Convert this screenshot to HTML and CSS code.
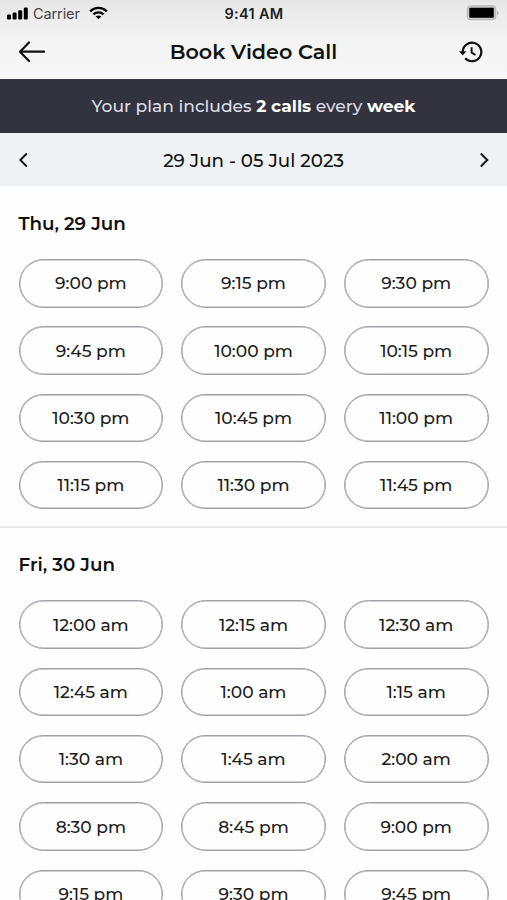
FILE: index.html
```html
<!DOCTYPE html>
<html lang="en">
<head>
    <meta charset="UTF-8">
    <meta name="viewport" content="width=device-width, initial-scale=1.0">
    <title>Book Video Call</title>
    <link rel="stylesheet" href="styles.css">
</head>
<body>
    <header class="header">
        <div class="status-bar">
            <div class="status-left">
                <svg class="signal-icon" width="22" height="13" viewBox="0 0 22 13" fill="#000">
                    <rect x="0" y="7.5" width="4" height="5" rx="1.2"/>
                    <rect x="5.6" y="5.5" width="4" height="7" rx="1.2"/>
                    <rect x="11.2" y="3.3" width="4" height="9.2" rx="1.2"/>
                    <rect x="16.8" y="0.5" width="4" height="12" rx="1.2"/>
                </svg>
                <span class="carrier">Carrier</span>
                <svg class="wifi-icon" width="19" height="14" viewBox="0 0 20 14" fill="none" stroke="#000" stroke-width="2.5">
                    <path d="M1.3 5.2C6.2 0.4 13.8 0.4 18.7 5.2"/>
                    <path d="M4.6 8.5C7.7 5.6 12.3 5.6 15.4 8.5"/>
                    <path d="M7 10.7C8.7 9.2 11.3 9.2 13 10.7L10 13.7Z" fill="#000" stroke="none"/>
                </svg>
            </div>
            <span class="clock">9:41 AM</span>
            <div class="status-right">
                <svg width="33" height="16" viewBox="0 0 33 16">
                    <rect x="1.3" y="0.8" width="28.5" height="14" rx="3.2" fill="#c9c9c9" stroke="#b4b4b4"/>
                    <rect x="3.3" y="2.8" width="24.5" height="10" rx="1" fill="#000"/>
                    <path d="M31 5.4C33 6.2 33 9.4 31 10.2Z" fill="#b4b4b4"/>
                </svg>
            </div>
        </div>
        <div class="title-bar">
            <button class="icon-btn" aria-label="Back">
                <svg width="28" height="22" viewBox="0 0 28 22" fill="none" stroke="#111" stroke-width="2.2" stroke-linecap="round" stroke-linejoin="round">
                    <path d="M26 10.7H2M11 1.5L2 10.7L11 19.9"/>
                </svg>
            </button>
            <h1>Book Video Call</h1>
            <button class="icon-btn" aria-label="History">
                <svg width="24" height="22" viewBox="0 0 24 22" fill="none" stroke="#111" stroke-width="2.2">
                    <path d="M3.7 11A9.3 9.3 0 1 1 6.2 17.3"/>
                    <path d="M0 10.2H7.4L3.7 14.6Z" fill="#111" stroke="none"/>
                    <path d="M12.6 6.2V11.6L16.5 14" stroke-width="1.9"/>
                </svg>
            </button>
        </div>
    </header>

    <div class="plan-banner">
        <p>Your plan includes <strong>2 calls</strong> every <strong>week</strong></p>
    </div>

    <nav class="week-nav">
        <button class="icon-btn" aria-label="Previous week">
            <svg width="10" height="16" viewBox="0 0 10 16" fill="none" stroke="#111" stroke-width="1.9">
                <path d="M8.8 1.5L2.3 8L8.8 14.5"/>
            </svg>
        </button>
        <span class="week-range">29 Jun - 05 Jul 2023</span>
        <button class="icon-btn" aria-label="Next week">
            <svg width="10" height="16" viewBox="0 0 10 16" fill="none" stroke="#111" stroke-width="1.9">
                <path d="M1.8 1.5L8.3 8L1.8 14.5"/>
            </svg>
        </button>
    </nav>

    <main>
        <section class="day">
            <h2>Thu, 29 Jun</h2>
            <div class="slots">
                <button class="slot">9:00 pm</button>
                <button class="slot">9:15 pm</button>
                <button class="slot">9:30 pm</button>
                <button class="slot">9:45 pm</button>
                <button class="slot">10:00 pm</button>
                <button class="slot">10:15 pm</button>
                <button class="slot">10:30 pm</button>
                <button class="slot">10:45 pm</button>
                <button class="slot">11:00 pm</button>
                <button class="slot">11:15 pm</button>
                <button class="slot">11:30 pm</button>
                <button class="slot">11:45 pm</button>
            </div>
        </section>

        <section class="day">
            <h2>Fri, 30 Jun</h2>
            <div class="slots">
                <button class="slot">12:00 am</button>
                <button class="slot">12:15 am</button>
                <button class="slot">12:30 am</button>
                <button class="slot">12:45 am</button>
                <button class="slot">1:00 am</button>
                <button class="slot">1:15 am</button>
                <button class="slot">1:30 am</button>
                <button class="slot">1:45 am</button>
                <button class="slot">2:00 am</button>
                <button class="slot">8:30 pm</button>
                <button class="slot">8:45 pm</button>
                <button class="slot">9:00 pm</button>
                <button class="slot">9:15 pm</button>
                <button class="slot">9:30 pm</button>
                <button class="slot">9:45 pm</button>
            </div>
        </section>
    </main>
</body>
</html>
```
FILE: styles.css
```css
:root {
    --dark-color: #32333f;
    --nav-bg-color: #eef2f5;
    --text-color: #111111;
    --slot-border-color: #a0a1a6;
    --divider-color: #e8e8ea;
}
* { margin: 0; padding: 0; box-sizing: border-box; }
body { height: 900px; overflow: hidden; background: #fefefe; color: var(--text-color); font-family: Montserrat, Inter, sans-serif; }
button { background: none; border: none; color: inherit; font: inherit; cursor: pointer; }
svg { display: block; }

.header { height: 79px; background: linear-gradient(#e7e7e7, #f3f3f3 50%, #f7f7f7); }
.status-bar { display: grid; grid-template-columns: 1fr auto 1fr; align-items: center; height: 26px; padding: 0 8px 0 7px; font-family: Inter, sans-serif; }
.status-left { display: flex; align-items: center; }
.carrier { margin-left: 4px; font-size: 14.5px; letter-spacing: -0.1px; color: #444; }
.wifi-icon { margin-left: 9px; }
.clock { padding-left: 2px; font-size: 14.5px; font-weight: 600; letter-spacing: 0.3px; color: #222; }
.status-right { display: flex; justify-content: flex-end; }
.title-bar { display: grid; grid-template-columns: 28px 1fr 24px; align-items: center; height: 52px; padding: 0 24px 0 18px; }
.title-bar h1 { padding-left: 2px; font-size: 20.7px; font-weight: 600; line-height: 24px; text-align: center; }

.plan-banner { display: flex; align-items: center; justify-content: center; height: 54px; padding-bottom: 1px; background: var(--dark-color); color: #dedee8; font-size: 17.1px; font-weight: 500; }
.plan-banner strong { font-weight: 700; color: #fff; }

.week-nav { display: flex; align-items: center; justify-content: space-between; height: 53px; padding: 0 18px; background: var(--nav-bg-color); }
.week-range { padding-top: 1px; font-size: 18.3px; font-weight: 500; }

.day { padding: 26px 18.5px 17px; border-bottom: 2px solid var(--divider-color); }
.day h2 { margin-bottom: 23px; font-size: 18.3px; font-weight: 600; line-height: 24px; }
.day + .day { padding-top: 25px; }
.slots { display: grid; grid-template-columns: repeat(3, 1fr); grid-auto-rows: 48.5px; gap: 18.8px 18px; }
.slot { padding-bottom: 1px; border: 1px solid var(--slot-border-color); border-radius: 25px; box-shadow: inset 0 0 0 0.5px var(--slot-border-color); color: #1c1c1c; font-size: 17.1px; font-weight: 500; }
```
